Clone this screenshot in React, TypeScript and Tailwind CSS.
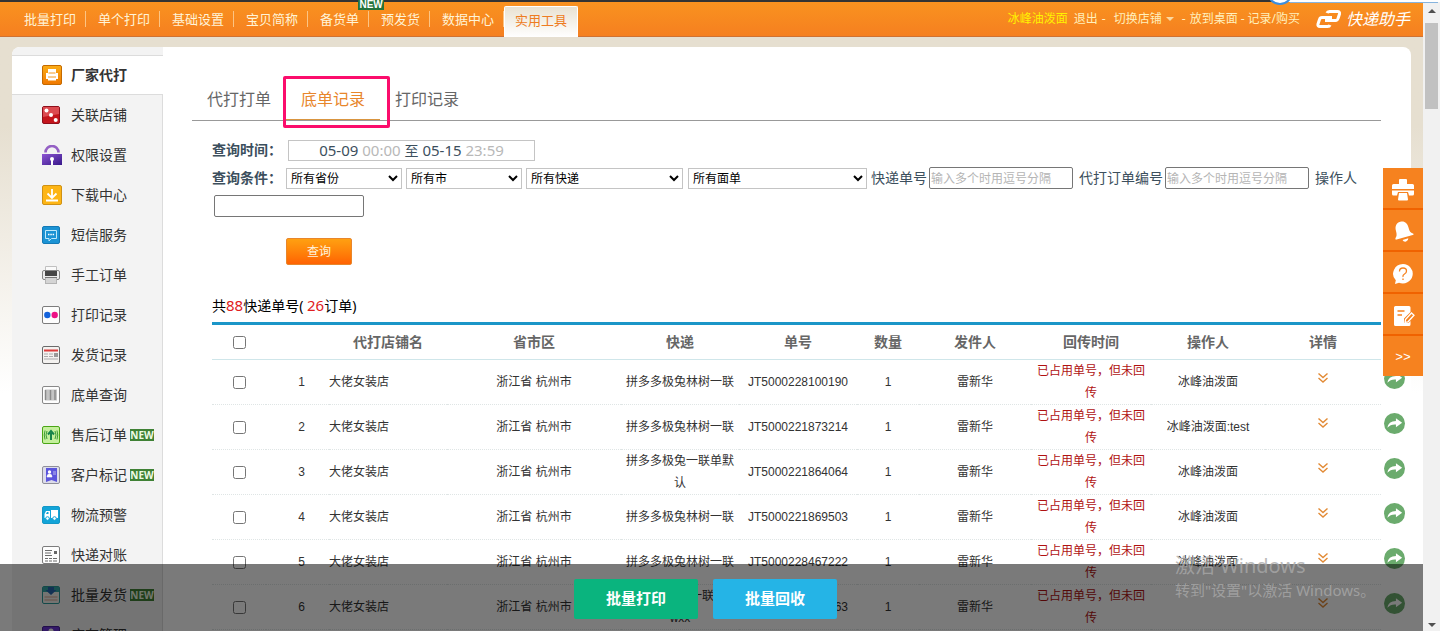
import React, { useState } from 'react';

const SANS = "font-['Liberation_Sans','Noto_Sans_CJK_SC',sans-serif]";
const YAHEI = "font-['Noto_Sans','Noto_Sans_CJK_SC',sans-serif]";

const navItems = [
    { label: '批量打印' },
    { label: '单个打印' },
    { label: '基础设置' },
    { label: '宝贝简称' },
    { label: '备货单', isNew: true },
    { label: '预发货' },
    { label: '数据中心' },
];

const RETURN_NOTE = '已占用单号，但未回传';

const rows = [
    { express: '拼多多极兔林树一联', no: 'JT5000228100190', operator: '冰峰油泼面' },
    { express: '拼多多极兔林树一联', no: 'JT5000221873214', operator: '冰峰油泼面:test' },
    { express: '拼多多极兔一联单默认', no: 'JT5000221864064', operator: '冰峰油泼面' },
    { express: '拼多多极兔林树一联', no: 'JT5000221869503', operator: '冰峰油泼面' },
    { express: '拼多多极兔林树一联', no: 'JT5000228467222', operator: '冰峰油泼面' },
    { express: '拼多多极兔一联单-wxx', no: 'JT5000228466763', operator: '' },
];

/* ---------- sidebar icons, all on a 20 x 20 box ---------- */

const Frame = ({ children, fill = '#fdfdfd', stroke = '#7c7c7c' }: { children?: React.ReactNode; fill?: string; stroke?: string }) => (
    <svg viewBox="0 0 20 20" className="w-5 h-5 block">
        <rect x="0.5" y="1.5" width="17" height="17" rx="1.5" fill={fill} stroke={stroke} />
        {children}
    </svg>
);

const FactoryIcon = () => (
    <svg viewBox="0 0 20 20" className="w-5 h-5 block">
        <defs>
            <linearGradient id="factory" x1="0" y1="0" x2="0" y2="1">
                <stop offset="0" stopColor="#fbae17" />
                <stop offset="1" stopColor="#f07800" />
            </linearGradient>
        </defs>
        <rect x="0.5" y="0.5" width="19" height="19" rx="1.5" fill="url(#factory)" stroke="#c46a00" />
        <path d="M6 4h8v4h2v6h-2v1.500H6V14H4V8h2z" fill="#fff" />
        <path d="M6.500 8h7M6 12h8" stroke="#f39a20" />
    </svg>
);

const DiceIcon = () => (
    <Frame fill="#c4151c" stroke="#8e0f1b">
        <path d="M1 2h16v7L1 12z" fill="#dc4a50" />
        <circle cx="4.500" cy="5.500" r="2" fill="#fff" />
        <circle cx="9" cy="10" r="2" fill="#fff" />
        <circle cx="13.700" cy="15" r="2" fill="#fff" />
    </Frame>
);

const LockIcon = () => (
    <svg viewBox="0 0 20 20" className="w-5 h-5 block">
        <defs>
            <linearGradient id="lock" x1="0" y1="0" x2="1" y2="1">
                <stop offset="0" stopColor="#8d55d2" />
                <stop offset="1" stopColor="#37188a" />
            </linearGradient>
        </defs>
        <path d="M3.500 7.500a6.500 6.500 0 0 1 13 0" fill="none" stroke="#9460c4" strokeWidth="2.600" />
        <rect y="9" width="20" height="11" fill="url(#lock)" />
        <circle cx="10" cy="14" r="2" fill="#fff" />
        <path d="M9 14.500h2V20H9z" fill="#fff" />
    </svg>
);

const DownloadIcon = () => (
    <svg viewBox="0 0 20 20" className="w-5 h-5 block">
        <rect x="0.5" y="0.5" width="19" height="19" rx="1.500" fill="#fdb515" stroke="#cf9114" />
        <path d="M10 4v8M5.500 8.500L10 13l4.500-4.500M4 15.500h12" fill="none" stroke="#fff" strokeWidth="1.800" />
    </svg>
);

const SmsIcon = () => (
    <Frame fill="#1b93d4" stroke="#1479b5">
        <path d="M3.500 5.500h11v8H9.500L7 16v-2.500H3.500z" fill="none" stroke="#bfe9fa" />
        <path d="M6 9.500h1.500M8.300 9.500h1.500M10.600 9.500h1.500" stroke="#fff" strokeWidth="1.500" />
    </Frame>
);

const PrinterIcon = () => (
    <svg viewBox="0 0 20 20" className="w-5 h-5 block">
        <path d="M3.500 1.500h11V6h-11z" fill="#fafafa" stroke="#c0c0c0" />
        <rect x="0.500" y="5.500" width="17" height="9" rx="1.500" fill="#ececec" stroke="#858585" />
        <rect x="3" y="6" width="12" height="5" fill="#454545" />
        <rect x="3.500" y="12.500" width="11" height="6" fill="#d4d4d4" stroke="#b4b4b4" />
        <path d="M3 12.500h12" stroke="#777" />
    </svg>
);

const DotsIcon = () => (
    <Frame>
        <circle cx="5.300" cy="10" r="3.200" fill="#1463dc" />
        <circle cx="12.700" cy="10" r="3.200" fill="#ee1286" />
    </Frame>
);

const ShipLogIcon = () => (
    <Frame fill="#f4f2f0" stroke="#6a6a6a">
        <path d="M2 5.500h14" stroke="#dd3b3b" strokeWidth="2" />
        <path d="M2 9h4M7 9h4M2 11.500h4M7 11.500h4M2 14h14" stroke="#aaa" />
        <rect x="12" y="8" width="4" height="4" fill="#999" />
    </Frame>
);

const BarcodeIcon = () => (
    <Frame stroke="#888">
        <path d="M3 4.500h12v11H3z" fill="#c4c4c4" />
        <path d="M3.500 5v10M8.500 5v10M13 5v10" stroke="#8a8a8a" strokeWidth="1.500" />
    </Frame>
);

const AfterSaleIcon = () => (
    <Frame fill="#c4ef9c" stroke="#4aa516">
        <path d="M9 15V8M6 9.500L9 6l3 3.500" fill="none" stroke="#16834b" strokeWidth="2" />
        <path d="M5 6q-2 4 0 8M3 5.500q-1.500 4.500 0 9M13 6q2 4 0 8M15 5.500q1.500 4.500 0 9" fill="none" stroke="#3d9a37" />
    </Frame>
);

const CustomerIcon = () => (
    <Frame fill="#dcdcea" stroke="#8f8f9a">
        <path d="M4 3h11v14l-5.500-2L4 17z" fill="#5b55dc" />
        <circle cx="7.500" cy="7" r="1.700" fill="#fff" />
        <path d="M5 12q0-3 2.500-3t2.500 3zM11 7h3M11 9h3" fill="#fff" stroke="#fff" strokeWidth="0.600" />
    </Frame>
);

const TruckIcon = () => (
    <Frame fill="#12a4d8" stroke="#1497c6">
        <path d="M9 5h7v8H9zM2.500 13V9l1.500-3h4v7z" fill="#fff" />
        <path d="M4 9l1-2h1.500v2z" fill="#12a4d8" />
        <circle cx="5.500" cy="13.500" r="1.800" fill="#fff" stroke="#12a4d8" />
        <circle cx="12.500" cy="13.500" r="1.800" fill="#fff" stroke="#12a4d8" />
    </Frame>
);

const BillIcon = () => (
    <Frame>
        <path d="M3 5.500h7M3 8h6M3 10.500h7M3 13.500h3M7 13.500h3M11 13.500h4M3 16h3M7 16h3M11 16h4" stroke="#6c6c6c" />
        <rect x="12" y="6" width="3" height="3" fill="#666" />
    </Frame>
);

const BatchShipIcon = () => (
    <Frame fill="#f3f3ee" stroke="#2a9a9a">
        <path d="M1 2h16v5H1z" fill="#35a8a8" />
        <path d="M6 2h6v3h2.500L9 10 3.500 5H6z" fill="#2767b0" />
        <path d="M2.500 12h13M2.500 15h13" stroke="#d9a793" />
    </Frame>
);

const StockIcon = () => (
    <Frame fill="#6b35d8" stroke="#47209c">
        <circle cx="9" cy="6" r="2.500" fill="#fff" />
    </Frame>
);

const sideItems: { label: string; Icon: React.FC; active?: boolean; isNew?: boolean }[] = [
    { label: '厂家代打', Icon: FactoryIcon, active: true },
    { label: '关联店铺', Icon: DiceIcon },
    { label: '权限设置', Icon: LockIcon },
    { label: '下载中心', Icon: DownloadIcon },
    { label: '短信服务', Icon: SmsIcon },
    { label: '手工订单', Icon: PrinterIcon },
    { label: '打印记录', Icon: DotsIcon },
    { label: '发货记录', Icon: ShipLogIcon },
    { label: '底单查询', Icon: BarcodeIcon },
    { label: '售后订单', Icon: AfterSaleIcon, isNew: true },
    { label: '客户标记', Icon: CustomerIcon, isNew: true },
    { label: '物流预警', Icon: TruckIcon },
    { label: '快递对账', Icon: BillIcon },
    { label: '批量发货', Icon: BatchShipIcon, isNew: true },
    { label: '库存管理', Icon: StockIcon },
];

/* ---------- right hand quick tools ---------- */

const quickTools = [
    {
        name: '打印',
        art: (
            <g fill="#fff">
                <rect x="8" y="1" width="8" height="7" rx="1" />
                <path d="M2.500 6H21.500a1.500 1.500 0 0 1 1.500 1.500V11H1V7.500A1.500 1.500 0 0 1 2.500 6zM1 12.500h22V16a1.500 1.500 0 0 1-1.500 1.500H18L17 14H7l-1 3.500H2.500A1.500 1.500 0 0 1 1 16z" />
                <path d="M8 15h8l1 6.500a1 1 0 0 1-1 1H8a1 1 0 0 1-1-1z" />
            </g>
        ),
    },
    {
        name: '提醒',
        art: (
            <g fill="#fff" transform="rotate(-15 12 12)">
                <path d="M12 1.500c4.500 0 6.500 3.500 6.500 7.500 0 4 .5 5.500 3 7v1.500H3V16c2-1.500 2.500-3 2.500-7 0-4 2-7.500 6.500-7.500z" />
                <path d="M9.500 19.500h6q-.5 2.500-3 2.500t-3-2.500z" />
            </g>
        ),
    },
    {
        name: '帮助',
        art: (
            <g>
                <path d="M12 2a10 9.700 0 1 1-4 18.700L4 22l.8-3.700A10 9.700 0 0 1 12 2z" fill="#fff" />
                <path d="M8.500 9.500q0-3.500 3.500-3.500t3.500 3q0 2-2 3t-1.500 3M12 16.500v1.500" fill="none" stroke="#f6821f" strokeWidth="1.300" />
            </g>
        ),
    },
    {
        name: '反馈',
        art: (
            <g>
                <path d="M4.500 2H18a1.500 1.500 0 0 1 1.500 1.500V8L13 14.500V19h4.500l2-2v3.500A1.500 1.500 0 0 1 18 22H4.500A1.500 1.500 0 0 1 3 20.500v-17A1.500 1.500 0 0 1 4.500 2z" fill="#fff" />
                <path d="M6.500 7h7M6.500 11h4.500" stroke="#f6821f" strokeWidth="1.500" />
                <path d="M14.500 15.500l6-6.500 2.500 2.300-6 6.500-3 .7z" fill="#f6821f" stroke="#fff" strokeWidth="1.300" />
            </g>
        ),
    },
];

const ShareIcon = () => (
    <svg viewBox="0 0 22 22" className="w-[21px] h-[21px] block">
        <circle cx="11" cy="11" r="11" fill="#6bab6d" />
        <path d="M12.500 5.500L19 10.200l-6.500 4.600V12q-5.500-.5-9 3.500Q4.500 8.500 12.500 8.300z" fill="#fff" />
    </svg>
);

const NewBadge = () => (
    <span className="bg-[#3f8135] text-[#eefbe6] text-[10px] leading-[12px] font-bold w-6 text-center overflow-hidden">NEW</span>
);

const headCell = 'h-[38px] p-0 border-t-[3px] border-t-[#1b96c8] border-b border-b-[#cfe6ea] font-bold text-sm text-[#666]';
const bodyCell = 'h-[45px] p-0 border-b border-dotted border-b-[#dfe5e5]';
const checkbox = 'block mx-auto w-[13px] h-[13px]';
const selectBox = 'h-[21px] border border-[#c4c4c4] text-xs text-black bg-white';
const textBox = 'h-[22px] px-px border border-[#767676] rounded-xs text-xs placeholder:text-[#b5b5b5]';

const TopBar = () => (
    <header className="shrink-0 border-t-2 border-t-[#333] bg-linear-to-b from-[#f9921f] to-[#f57f20]">
        <div className="h-[35px] flex items-stretch justify-between border-b border-b-[#cf7233] pl-3">
            <nav className="flex items-center text-[13px] text-[#fff4d8]">
                {navItems.map(item => (
                    <a key={item.label} href="#" className="relative h-4 leading-4 pl-3 pr-[9px] border-r border-r-[#fcc484]">
                        {item.label}
                        {item.isNew && (
                            <span className="absolute -top-[11px] right-[-16px] w-[26px] h-[10px] leading-[10px] bg-[#23733a] text-white text-[10px] font-bold text-center font-['Liberation_Sans',sans-serif]">NEW</span>
                        )}
                    </a>
                ))}
                <a href="#" className="self-end h-[31px] leading-[26px] px-[10px] rounded-t-xs border border-b-0 border-white bg-linear-to-b from-[#e9e2d2] to-white text-[#ee7c22] -mb-px">实用工具</a>
            </nav>
            <div className="flex items-center text-xs text-[#fff0bd] pr-[13px]">
                <span className="text-[#fff200] mr-[6px]">冰峰油泼面</span>
                <a href="#">退出</a>
                <span className="mx-1">-</span>
                <a href="#" className="ml-1 flex items-center gap-1">
                    切换店铺
                    <svg viewBox="0 0 8 4" className="w-2 h-1"><path d="M0 0h8L4 4z" fill="#fbd9a0" /></svg>
                </a>
                <span className="ml-2 mr-1">-</span>
                <a href="#">放到桌面</a>
                <span className="mx-[3px]">-</span>
                <a href="#">记录/购买</a>
                <a href="#" className="ml-[15px] flex items-center gap-1 text-white text-base italic" aria-label="快递助手">
                    <svg viewBox="0 0 27 20" className="w-[27px] h-5">
                        <path d="M17 8.500H7q-2 0-2.500 2L3 15q-.7 2.500 2 2.500h7.500q2 0 2.500-1.500M10 11.500h10.500q2 0 2.500-2L24.500 5q.5-2.500-2-2.500h-8q-2 0-2.500 1.500" fill="none" stroke="#fff" strokeWidth="3" />
                    </svg>
                    快递助手
                </a>
            </div>
        </div>
    </header>
);

const Sidebar = () => (
    <aside className="w-[151px] shrink-0 bg-[#f3f3f3] rounded-tl-lg pt-2">
        {sideItems.map(({ label, Icon, active, isNew }) => (
            <a
                key={label}
                href="#"
                className={
                    active
                        ? 'h-10 flex items-center pl-[30px] text-sm font-bold text-[#333] bg-white border-y border-[#dcdcdc]'
                        : 'h-10 flex items-center pl-[30px] text-sm text-[#333] border-r border-[#dcdcdc]'
                }
            >
                <Icon />
                <span className="ml-[9px] mr-[3px]">{label}</span>
                {isNew && <NewBadge />}
            </a>
        ))}
    </aside>
);

const ScrollBar = () => (
    <div className="w-[17px] shrink-0 bg-[#f1f1f1] border-t-2 border-t-white flex flex-col items-center justify-between">
        <div className="flex flex-col items-center">
            <svg viewBox="0 0 17 21" className="w-[17px] h-[21px]"><path d="M5 11h8L9 7z" fill="#505050" /></svg>
            <div className="w-[13px] h-[86px] bg-[#c1c1c1]" />
        </div>
        <svg viewBox="0 0 17 12" className="w-[17px] h-3"><path d="M5 4h8L9 8z" fill="#505050" /></svg>
    </div>
);

export default function App() {
    const [checked, setChecked] = useState<number[]>([]);
    const [waybill, setWaybill] = useState('');
    const [orderNo, setOrderNo] = useState('');
    const [operator, setOperator] = useState('');

    const toggle = (i: number) => setChecked(c => (c.includes(i) ? c.filter(n => n !== i) : [...c, i]));
    const toggleAll = () => setChecked(c => (c.length === rows.length ? [] : rows.map((_, i) => i)));

    return (
        <div className={`relative h-screen overflow-hidden flex ${YAHEI}`}>
            <div className="relative flex-1 min-w-0 flex flex-col overflow-hidden">
                <TopBar />

                <div className="flex-1 min-h-0 px-3 pt-[10px] bg-linear-to-b from-[#e6dfd0] from-15% to-white to-60%">
                    <div className="flex bg-white rounded-t-lg">
                        <Sidebar />

                        <main className="flex-1 min-w-0 pt-8">
                            <div className="relative ml-[29px] mr-[30px] flex border-b border-b-[#999] text-base text-[#666]">
                                <a href="#" className="h-[41px] leading-[41px] px-[15px]">代打打单</a>
                                <a href="#" className="h-[41px] leading-[41px] px-[15px] text-[#e8862b] border-b border-b-[#d99540]">底单记录</a>
                                <a href="#" className="h-[41px] leading-[41px] px-[15px]">打印记录</a>
                                <div className="absolute left-[91px] -top-[3px] w-[107px] h-[52px] border-[3px] border-[#fb0d6c] rounded-xs" />
                            </div>

                            <form className="ml-[49px] mr-[30px] mt-[15px] text-sm text-[#3c4f5d]" onSubmit={e => e.preventDefault()}>
                                <div className="flex items-center h-7">
                                    <span className="font-bold w-[76px]">查询时间：</span>
                                    <button type="button" className="w-[247px] h-[21px] border border-[#c4c4c4] text-[15px] leading-[19px] text-center">
                                        05-09 <span className="text-[#b8b8b8]">00:00</span> <span className="text-sm">至</span> 05-15 <span className="text-[#b8b8b8]">23:59</span>
                                    </button>
                                </div>
                                <div className="flex flex-wrap items-center">
                                    <span className="font-bold w-[74px] h-7 leading-7">查询条件：</span>
                                    <select aria-label="省份" className={`${selectBox} w-[116px] mr-1`}>
                                        <option>所有省份</option>
                                    </select>
                                    <select aria-label="市" className={`${selectBox} w-[116px] mr-1`}>
                                        <option>所有市</option>
                                    </select>
                                    <select aria-label="快递" className={`${selectBox} w-[157px] mr-[5px]`}>
                                        <option>所有快递</option>
                                    </select>
                                    <select aria-label="面单" className={`${selectBox} w-[179px] mr-1`}>
                                        <option>所有面单</option>
                                    </select>
                                    <label htmlFor="waybill" className="mr-[2px]">快递单号</label>
                                    <input id="waybill" value={waybill} onChange={e => setWaybill(e.target.value)} placeholder="输入多个时用逗号分隔" className={`${textBox} w-[144px] mr-[6px]`} />
                                    <label htmlFor="orderNo" className="mr-[2px]">代打订单编号</label>
                                    <input id="orderNo" value={orderNo} onChange={e => setOrderNo(e.target.value)} placeholder="输入多个时用逗号分隔" className={`${textBox} w-[144px] mr-[6px]`} />
                                    <label htmlFor="operator">操作人</label>
                                    <div className="w-full h-7 flex items-center pl-[2px]">
                                        <input id="operator" value={operator} onChange={e => setOperator(e.target.value)} className={`${textBox} w-[150px]`} />
                                    </div>
                                </div>
                                <button type="submit" className="block mt-[18px] ml-[74px] w-[66px] h-[27px] rounded-xs border border-[#e8862b] bg-linear-to-b from-[#ffa011] to-[#ff6203] text-xs text-[#fff3dc]">查询</button>
                            </form>

                            <p className="ml-[49px] mt-[26px] h-[31px] leading-7 text-sm text-black">
                                共<span className="text-[15px] text-[#e02020]">88</span>快递单号( <span className="text-[15px] text-[#e02020]">26</span>订单)
                            </p>

                            <div className={`pl-[49px] ${SANS}`}>
                                <table className="w-full table-fixed border-separate border-spacing-0 text-xs leading-[22px] text-[#333] text-center">
                                    <colgroup>
                                        <col className="w-[54px]" />
                                        <col className="w-[63px]" />
                                        <col className="w-[118px]" />
                                        <col className="w-[174px]" />
                                        <col className="w-[118px]" />
                                        <col className="w-[118px]" />
                                        <col className="w-[62px]" />
                                        <col className="w-[112px]" />
                                        <col className="w-[120px]" />
                                        <col className="w-[114px]" />
                                        <col className="w-[116px]" />
                                        <col className="w-[30px]" />
                                    </colgroup>
                                    <thead>
                                        <tr>
                                            <th className={headCell}>
                                                <input type="checkbox" aria-label="全选" checked={checked.length === rows.length} onChange={toggleAll} className={checkbox} />
                                            </th>
                                            <th className={headCell} />
                                            {['代打店铺名', '省市区', '快递', '单号', '数量', '发件人', '回传时间', '操作人', '详情'].map(h => (
                                                <th key={h} className={headCell}>{h}</th>
                                            ))}
                                            <th />
                                        </tr>
                                    </thead>
                                    <tbody>
                                        {rows.map((row, i) => (
                                            <tr key={row.no}>
                                                <td className={bodyCell}>
                                                    <input type="checkbox" aria-label={`选择第${i + 1}行`} checked={checked.includes(i)} onChange={() => toggle(i)} className={checkbox} />
                                                </td>
                                                <td className={`${bodyCell} pl-2`}>{i + 1}</td>
                                                <td className={`${bodyCell} text-left`}>大佬女装店</td>
                                                <td className={bodyCell}>浙江省 杭州市</td>
                                                <td className={`${bodyCell} px-1`}>{row.express}</td>
                                                <td className={bodyCell}>{row.no}</td>
                                                <td className={bodyCell}>1</td>
                                                <td className={bodyCell}>雷新华</td>
                                                <td className={`${bodyCell} px-[5px] text-[#b01212]`}>{RETURN_NOTE}</td>
                                                <td className={bodyCell}>{row.operator}</td>
                                                <td className={bodyCell}>
                                                    <button type="button" aria-label="展开详情" className="block mx-auto pb-2">
                                                        <svg viewBox="0 0 10 10" className="w-[10px] h-[10px] block">
                                                            <path d="M0.500 0.500L5 4.500l4.500-4M0.500 5L5 9l4.500-4" fill="none" stroke="#e28a35" strokeWidth="1.400" />
                                                        </svg>
                                                    </button>
                                                </td>
                                                <td className="p-0 pl-[3px] pb-2">
                                                    <button type="button" aria-label="分享" className="block">
                                                        <ShareIcon />
                                                    </button>
                                                </td>
                                            </tr>
                                        ))}
                                    </tbody>
                                </table>
                            </div>
                        </main>
                    </div>
                </div>

                {/* quick tools float over the right edge of the table */}
                <div className="absolute right-0 top-[168px] w-10 bg-[#f6821f] flex flex-col">
                    {quickTools.map(tool => (
                        <button key={tool.name} type="button" aria-label={tool.name} className="h-[42px] flex items-center justify-center border-b-2 border-b-[#f06200] pt-1">
                            <svg viewBox="0 0 24 24" className="w-6 h-6">{tool.art}</svg>
                        </button>
                    ))}
                    <button type="button" className="h-10 text-[13px] text-white pt-1 font-['Liberation_Mono',monospace]">&gt;&gt;</button>
                </div>

                {/* batch actions */}
                <div className="absolute inset-x-0 bottom-0 h-[67px] bg-black/52 flex justify-center items-center gap-[15px] pr-3 pt-[2px]">
                    <button type="button" className="w-[124px] h-10 rounded-xs bg-[#0ab47e] text-white text-[15px] font-bold">批量打印</button>
                    <button type="button" className="w-[124px] h-10 rounded-xs bg-[#25b4e6] text-white text-[15px] font-bold">批量回收</button>
                </div>

                <div className="absolute right-[50px] bottom-[29px] w-[198px] text-[#a9a9a9]/80 whitespace-nowrap pointer-events-none">
                    <div className="text-xl leading-6">激活 Windows</div>
                    <div className="text-[15px] leading-6">转到"设置"以激活 Windows。</div>
                </div>
            </div>

            <ScrollBar />

            {/* corner of the window that peeks in above the page */}
            <svg viewBox="0 0 172 6" className="absolute right-0 top-0 w-[172px] h-[6px]">
                <path d="M20 0h150v2H20z" fill="#fff" />
                <path d="M22 2.500h148" stroke="#86b4de" />
                <circle cx="12" cy="-8" r="12" fill="#fff" stroke="#3b8ede" strokeWidth="2" />
            </svg>
        </div>
    );
}
